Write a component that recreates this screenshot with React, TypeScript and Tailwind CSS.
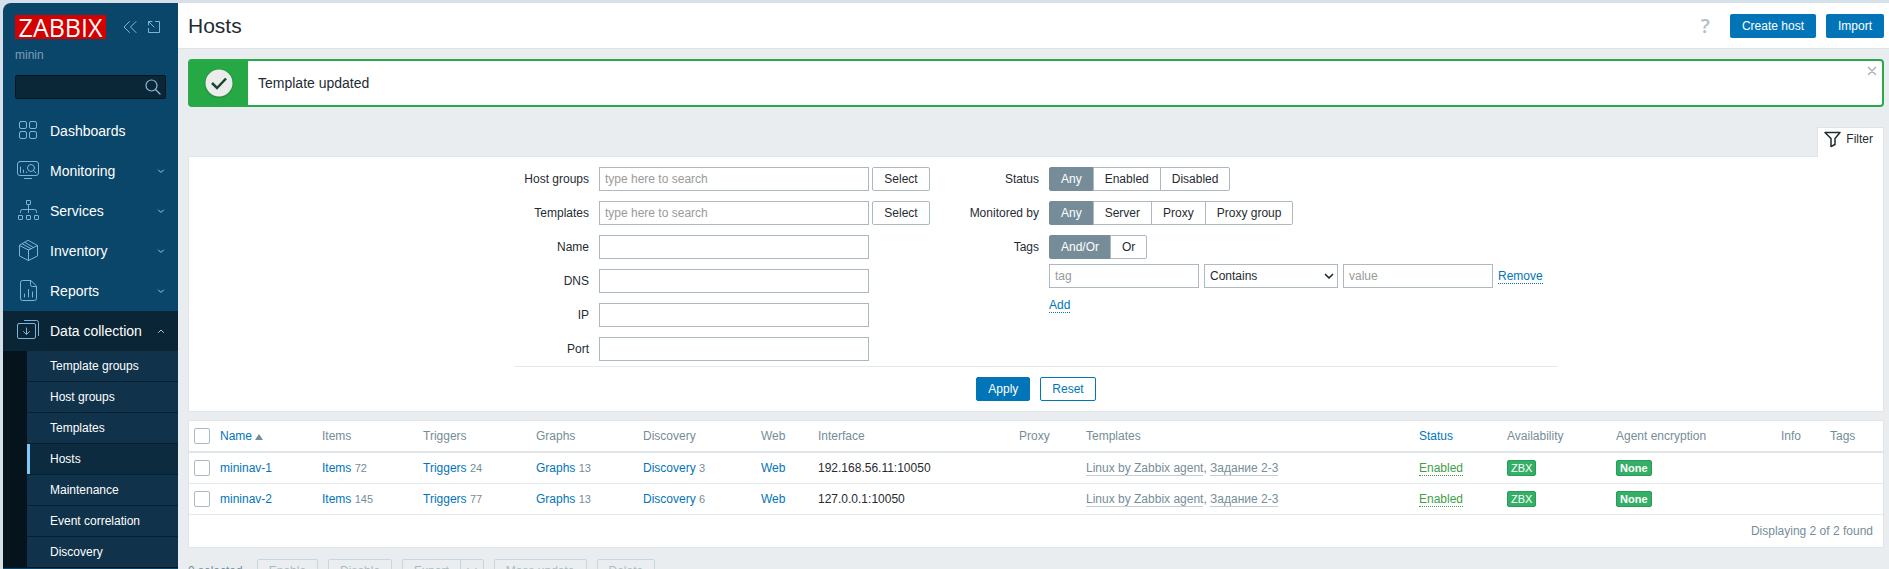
import React from "react";

const stroke = {
  fill: "none",
  stroke: "currentColor",
  strokeWidth: 1,
  strokeLinecap: "round" as const,
  strokeLinejoin: "round" as const,
};

function NavIcon({ children }: { children: React.ReactNode }) {
  return (
    <svg width="24" height="24" viewBox="0 0 24 24" className="shrink-0 text-[#7fb4da]" aria-hidden="true" {...stroke}>
      {children}
    </svg>
  );
}

const icons = {
  dashboards: (
    <NavIcon>
      <rect x="3.5" y="2.5" width="7" height="7" rx="1.5" />
      <rect x="13.5" y="2.5" width="7" height="7" rx="1.5" />
      <rect x="3.5" y="12.5" width="7" height="7" rx="1.5" />
      <rect x="13.5" y="12.5" width="7" height="7" rx="1.5" />
    </NavIcon>
  ),
  monitoring: (
    <NavIcon>
      <rect x="1.5" y="2.5" width="21" height="14" rx="2.5" />
      <path d="M8.5 19.5h7M4.5 8v5.500M7.500 11v2.500M10.500 13v.5" />
      <circle cx="15" cy="9" r="3.500" />
      <path d="M17.500 11.500l2.500 2.500" />
    </NavIcon>
  ),
  services: (
    <NavIcon>
      <rect x="10.5" y="1.5" width="4" height="4" rx=".5" />
      <rect x="2.5" y="16.5" width="4" height="4" rx=".5" />
      <rect x="10.5" y="16.5" width="4" height="4" rx=".5" />
      <rect x="18.5" y="16.5" width="4" height="4" rx=".5" />
      <path d="M12.5 5.5v8M4.5 13.5v-1a2 2 0 0 1 2-2h12a2 2 0 0 1 2 2v1" />
    </NavIcon>
  ),
  inventory: (
    <NavIcon>
      <path d="M12.500 1.500l9 5v10.500l-9 4.500-9-4.500V6.500zM3.500 6.500l9 4.500 9-4.500M12.500 11v10.500M9 3.500l8.500 5M6.500 5l8.500 4.700" />
    </NavIcon>
  ),
  reports: (
    <NavIcon>
      <path d="M14.5 1.5h-8a2 2 0 0 0-2 2v16a2 2 0 0 0 2 2h12a2 2 0 0 0 2-2v-12zM14.5 1.5v4a2 2 0 0 0 2 2h4" />
      <path d="M8.5 15v3M12.5 10.5V18M16.5 13v5" />
    </NavIcon>
  ),
  data: (
    <NavIcon>
      <rect x="1.5" y="4.5" width="18" height="15" rx="1.5" />
      <path d="M8.5 1.5h12a2 2 0 0 1 2 2v13M10.5 9v6.500M7.500 12.500l3 3 3-3" />
    </NavIcon>
  ),
};

const nav: { label: string; icon: React.ReactNode; state?: "closed" | "open" }[] = [
  { label: "Dashboards", icon: icons.dashboards },
  { label: "Monitoring", icon: icons.monitoring, state: "closed" },
  { label: "Services", icon: icons.services, state: "closed" },
  { label: "Inventory", icon: icons.inventory, state: "closed" },
  { label: "Reports", icon: icons.reports, state: "closed" },
  { label: "Data collection", icon: icons.data, state: "open" },
];

const subnav = ["Template groups", "Host groups", "Templates", "Hosts", "Maintenance", "Event correlation", "Discovery"];

function Sidebar() {
  return (
    <aside className="w-[175px] shrink-0 overflow-hidden rounded-tl-lg bg-[#0a466a] text-white">
      <div className="flex items-center px-3 pt-3">
        <a href="#" className="flex h-6 w-[91px] items-center justify-center bg-[#d40000] font-['Open_Sans',sans-serif] text-[25px] leading-6">
          ZABBIX
        </a>
        <button type="button" aria-label="Collapse sidebar" className="ml-4 text-[#7fb4da]">
          <svg width="16" height="16" viewBox="0 0 16 16" {...stroke}>
            <path d="M7.500 2.500L2 8l5.500 5.500M14 2.500L8.500 8l5.500 5.500" />
          </svg>
        </button>
        <button type="button" aria-label="Hide sidebar" className="ml-2 text-[#7fb4da]">
          <svg width="16" height="16" viewBox="0 0 16 16" {...stroke}>
            <path d="M2.500 9.500v4h11v-11h-4M2.500 6v-3.500h3.500M2.500 2.500l5.500 5.500" />
          </svg>
        </button>
      </div>
      <div className="px-3 pt-2 text-xs leading-4 text-[#7a9fb8]">minin</div>
      <div className="px-3 pt-3 pb-3">
        <div className="flex h-6 items-center rounded-xs border border-[#04161f] bg-[#0a2738] pr-1">
          <input type="text" aria-label="Search" className="h-full min-w-0 flex-1 bg-transparent px-2 outline-none" />
          <button type="button" aria-label="Run search" className="text-[#8fbbdb]">
            <svg width="16" height="16" viewBox="0 0 16 16" {...stroke} strokeWidth="1.2">
              <circle cx="6.5" cy="6.5" r="5.5" />
              <path d="M10.5 10.5l4.500 4.500" />
            </svg>
          </button>
        </div>
      </div>
      <nav>
        {nav.map((n) => (
          <a
            key={n.label}
            href="#"
            className={`flex h-10 items-center gap-[10px] pr-3 pl-[13px] text-sm ${n.state === "open" ? "bg-[#0a2535]" : ""}`}
          >
            {n.icon}
            <span className="flex-1 whitespace-nowrap">{n.label}</span>
            {n.state && (
              <svg width="10" height="10" viewBox="0 0 10 10" className="text-[#a3c8e2]" {...stroke}>
                <path d={n.state === "open" ? "M2.500 6.500l2.500-2.500 2.500 2.500" : "M2.500 4l2.500 2.500 2.500-2.500"} />
              </svg>
            )}
          </a>
        ))}
        <ul className="border-b border-[#05131d] bg-[#05131d] pl-6 text-xs">
          {subnav.map((s) => (
            <li key={s} className="border-b border-[#05202f] last:border-b-0">
              <a
                href="#"
                className={`flex h-[30px] items-center border-l-3 pl-5 ${s === "Hosts" ? "border-[#7fc8fb] bg-[#0c2b3f]" : "border-[#10324a] bg-[#10324a]"}`}
              >
                {s}
              </a>
            </li>
          ))}
        </ul>
      </nav>
    </aside>
  );
}

const inputCls = "h-6 rounded-none border border-[#acb9c0] bg-white px-[5px] placeholder:text-[#9a9a9a] outline-none";

function Radios({ name, options }: { name: string; options: string[] }) {
  return (
    <div role="radiogroup" aria-label={name} className="flex">
      {options.map((o, i) => (
        <label
          key={o}
          className="-ml-px flex h-6 cursor-pointer items-center border border-[#acb9c0] bg-white px-[10px] pl-[11px] pr-[11px] first:ml-0 first:rounded-l-xs last:rounded-r-xs has-checked:border-[#768d99] has-checked:bg-[#768d99] has-checked:text-white"
        >
          <input type="radio" name={name} defaultChecked={i === 0} className="sr-only" />
          {o}
        </label>
      ))}
    </div>
  );
}

function FilterForm() {
  return (
    <form className="border border-[#dfe4e7] bg-white pt-[10px] pb-[10px]" onSubmit={(e) => e.preventDefault()}>
      <div className="mx-auto w-[1044px]">
        <div className="flex border-b border-[#e5e9eb] pb-[5px]">
          <div className="grid grid-cols-[75px_auto] content-start items-center gap-x-[10px] gap-y-[10px]">
            {["Host groups", "Templates", "Name", "DNS", "IP", "Port"].map((l, i) => (
              <React.Fragment key={l}>
                <label htmlFor={`filter-${l}`} className="text-right">
                  {l}
                </label>
                <div className="flex gap-[3px]">
                  <input
                    id={`filter-${l}`}
                    type="text"
                    placeholder={i < 2 ? "type here to search" : undefined}
                    className={`${inputCls} w-[270px]`}
                  />
                  {i < 2 && (
                    <button type="button" className="h-6 w-[58px] rounded-xs border border-[#acb9c0] bg-white">
                      Select
                    </button>
                  )}
                </div>
              </React.Fragment>
            ))}
          </div>
          <div className="ml-[33px] grid grid-cols-[76px_auto] content-start items-center gap-x-[10px] gap-y-[10px]">
            <span className="text-right">Status</span>
            <Radios name="Status" options={["Any", "Enabled", "Disabled"]} />
            <span className="text-right">Monitored by</span>
            <Radios name="Monitored by" options={["Any", "Server", "Proxy", "Proxy group"]} />
            <span className="text-right">Tags</span>
            <Radios name="Tags" options={["And/Or", "Or"]} />
            <div className="col-start-2 -mt-[5px] flex items-center gap-[5px]">
              <input type="text" aria-label="Tag" placeholder="tag" className={`${inputCls} w-[150px]`} />
              <div className="relative flex items-center">
                <select aria-label="Operator" className={`${inputCls} w-[134px] appearance-none`}>
                  <option>Contains</option>
                </select>
                <svg width="10" height="10" viewBox="0 0 10 10" className="pointer-events-none absolute right-1" {...stroke} strokeWidth="1.7">
                  <path d="M1.5 3.5L5 7l3.5-3.5" />
                </svg>
              </div>
              <input type="text" aria-label="Value" placeholder="value" className={`${inputCls} w-[150px]`} />
              <button type="button" className="border-b border-dotted border-[#0275b8] leading-[14px] text-[#0275b8]">
                Remove
              </button>
            </div>
            <button type="button" className="col-start-2 justify-self-start border-b border-dotted border-[#0275b8] leading-[14px] text-[#0275b8]">
              Add
            </button>
          </div>
        </div>
        <div className="flex justify-center gap-[10px] pt-[10px]">
          <button type="submit" className="h-6 rounded-xs border border-[#0275b8] bg-[#0275b8] px-[11px] text-white">
            Apply
          </button>
          <button type="reset" className="h-6 rounded-xs border border-[#0275b8] bg-white px-[11px] text-[#0275b8]">
            Reset
          </button>
        </div>
      </div>
    </form>
  );
}

const hosts = [
  { name: "mininav-1", items: 72, triggers: 24, graphs: 13, discovery: 3, iface: "192.168.56.11:10050" },
  { name: "mininav-2", items: 145, triggers: 77, graphs: 13, discovery: 6, iface: "127.0.0.1:10050" },
];

function Check({ label }: { label: string }) {
  return (
    <input
      type="checkbox"
      aria-label={label}
      className="block size-4 appearance-none rounded-xs border border-[#acb9c0] bg-white checked:bg-[#0275b8]"
    />
  );
}

function Count({ label, n }: { label: string; n: number }) {
  return (
    <td className="px-[5px]">
      <a href="#" className="text-[#0275b8]">
        {label}
      </a>{" "}
      <span className="text-[11px] text-[#768d99]">{n}</span>
    </td>
  );
}

function Badge({ children }: { children: React.ReactNode }) {
  return (
    <span className="inline-flex h-4 items-center rounded-xs border border-[#2c9a59] bg-[#34af67] px-[3px] align-middle text-[11px] text-white">
      {children}
    </span>
  );
}

function HostsTable() {
  const th = "px-[5px] text-left font-normal";
  return (
    <div className="mt-2 border border-[#dfe4e7] bg-white">
      <table className="w-full table-fixed border-collapse whitespace-nowrap">
        <colgroup>
          <col className="w-[26px]" />
          <col className="w-[102px]" />
          <col className="w-[101px]" />
          <col className="w-[113px]" />
          <col className="w-[107px]" />
          <col className="w-[118px]" />
          <col className="w-[57px]" />
          <col className="w-[201px]" />
          <col className="w-[67px]" />
          <col />
          <col className="w-[88px]" />
          <col className="w-[109px]" />
          <col className="w-[165px]" />
          <col className="w-[49px]" />
          <col className="w-[58px]" />
        </colgroup>
        <thead>
          <tr className="h-[31px] border-b-2 border-[#dfe4e7] text-[#768d99]">
            <th className={th}>
              <Check label="Select all" />
            </th>
            <th className={th}>
              <a href="#" className="text-[#0275b8]">
                Name
                <svg width="8" height="6" viewBox="0 0 8 6" className="ml-[3px] inline-block fill-[#768d99]" aria-hidden="true">
                  <path d="M4 0l4 6H0z" />
                </svg>
              </a>
            </th>
            {["Items", "Triggers", "Graphs", "Discovery", "Web", "Interface", "Proxy", "Templates"].map((h) => (
              <th key={h} className={th}>
                {h}
              </th>
            ))}
            <th className={th}>
              <a href="#" className="text-[#0275b8]">
                Status
              </a>
            </th>
            {["Availability", "Agent encryption", "Info", "Tags"].map((h) => (
              <th key={h} className={th}>
                {h}
              </th>
            ))}
          </tr>
        </thead>
        <tbody>
          {hosts.map((h) => (
            <tr key={h.name} className="h-[31px] border-b border-[#e5e9eb]">
              <td className="px-[5px]">
                <Check label={h.name} />
              </td>
              <td className="px-[5px]">
                <a href="#" className="text-[#0275b8]">
                  {h.name}
                </a>
              </td>
              <Count label="Items" n={h.items} />
              <Count label="Triggers" n={h.triggers} />
              <Count label="Graphs" n={h.graphs} />
              <Count label="Discovery" n={h.discovery} />
              <td className="px-[5px]">
                <a href="#" className="text-[#0275b8]">
                  Web
                </a>
              </td>
              <td className="px-[5px]">{h.iface}</td>
              <td />
              <td className="px-[5px] text-[#768d99]">
                <a href="#" className="border-b border-[#c4ced3]">
                  Linux by Zabbix agent
                </a>
                ,{" "}
                <a href="#" className="border-b border-[#c4ced3]">
                  Задание 2-3
                </a>
              </td>
              <td className="px-[5px]">
                <a href="#" className="border-b border-dotted border-[#429e47] text-[#429e47]">
                  Enabled
                </a>
              </td>
              <td className="px-[5px]">
                <Badge>ZBX</Badge>
              </td>
              <td className="px-[5px]">
                <Badge>
                  <b>None</b>
                </Badge>
              </td>
              <td />
              <td />
            </tr>
          ))}
        </tbody>
      </table>
      <div className="flex h-8 items-center justify-end px-[10px] text-[#768d99]">Displaying 2 of 2 found</div>
    </div>
  );
}

const mutedBtn = "h-6 border border-[#ccd5d9] bg-[#ebeef0] px-[11px] text-[#acbbc2]";

export default function App() {
  return (
    <div className="flex h-screen overflow-hidden bg-[#d5e0e8] pt-[3px] pl-[3px] font-['Liberation_Sans',Arial,sans-serif] text-xs text-[#1f2c33]">
      <Sidebar />
      <main className="min-w-0 flex-1 bg-[#e9edf0]">
        <header className="flex h-[46px] items-center border-b border-[#dfe4e7] bg-white pr-[5px] pl-[10px]">
          <h1 className="flex-1 text-[21px]">Hosts</h1>
          <a href="#" aria-label="Help" className="pr-5 font-['Open_Sans',sans-serif] text-xl font-semibold text-[#b4c0c6]">
            ?
          </a>
          <div className="flex gap-[10px]">
            <button type="button" className="h-6 rounded-xs bg-[#0275b8] px-3 text-white">
              Create host
            </button>
            <button type="button" className="h-6 rounded-xs bg-[#0275b8] px-3 text-white">
              Import
            </button>
          </div>
        </header>
        <div className="pt-[10px] pr-[5px] pl-[10px]">
          <div role="status" className="relative flex h-12 items-center rounded-sm border-2 border-[#2ba84a] bg-white">
            <div className="flex h-full w-[58px] items-center justify-center bg-[#26a845]">
              <svg width="34" height="34" viewBox="0 0 34 34" aria-hidden="true">
                <circle cx="17" cy="17.5" r="14.5" fill="#1c8136" opacity=".5" />
                <circle cx="17" cy="17" r="13.5" fill="#ececec" />
                <path d="M10 17l5 5 9-9.5" fill="none" stroke="#17472f" strokeWidth="2.5" />
              </svg>
            </div>
            <p className="pl-[10px] text-sm">Template updated</p>
            <button type="button" aria-label="Close" className="absolute top-1 right-1 text-[#acb9c0]">
              <svg width="12" height="12" viewBox="0 0 12 12" {...stroke} strokeWidth="1.7">
                <path d="M2.5 2.5l7 7M9.5 2.5l-7 7" />
              </svg>
            </button>
          </div>
          <div className="mt-5 flex justify-end">
            <button type="button" className="relative -mb-px flex h-[30px] items-start gap-[5px] border border-b-0 border-[#dfe4e7] bg-white px-[6px] pt-[3px] pr-[10px]">
              <svg width="17" height="17" viewBox="0 0 17 17" {...stroke} strokeWidth="1.5">
                <path d="M1 1.500h15l-5 6v6l-4 2v-8z" />
              </svg>
              <span className="leading-[17px]">Filter</span>
            </button>
          </div>
          <FilterForm />
          <HostsTable />
          <div className="flex items-center gap-[10px] pt-[11px] text-[#768d99]">
            <span className="pr-1">0 selected</span>
            <button type="button" disabled className={`${mutedBtn} rounded-xs`}>
              Enable
            </button>
            <button type="button" disabled className={`${mutedBtn} rounded-xs`}>
              Disable
            </button>
            <div className="flex">
              <button type="button" disabled className={`${mutedBtn} rounded-l-xs`}>
                Export
              </button>
              <button type="button" disabled aria-label="Export formats" className="-ml-px flex h-6 w-6 items-center justify-center rounded-r-xs border border-[#ccd5d9] text-[#acbbc2]">
                <svg width="12" height="12" viewBox="0 0 12 12" {...stroke} strokeWidth="1.7">
                  <path d="M2 4l4 4 4-4" />
                </svg>
              </button>
            </div>
            <button type="button" disabled className={`${mutedBtn} rounded-xs`}>
              Mass update
            </button>
            <button type="button" disabled className={`${mutedBtn} rounded-xs`}>
              Delete
            </button>
          </div>
        </div>
      </main>
    </div>
  );
}
